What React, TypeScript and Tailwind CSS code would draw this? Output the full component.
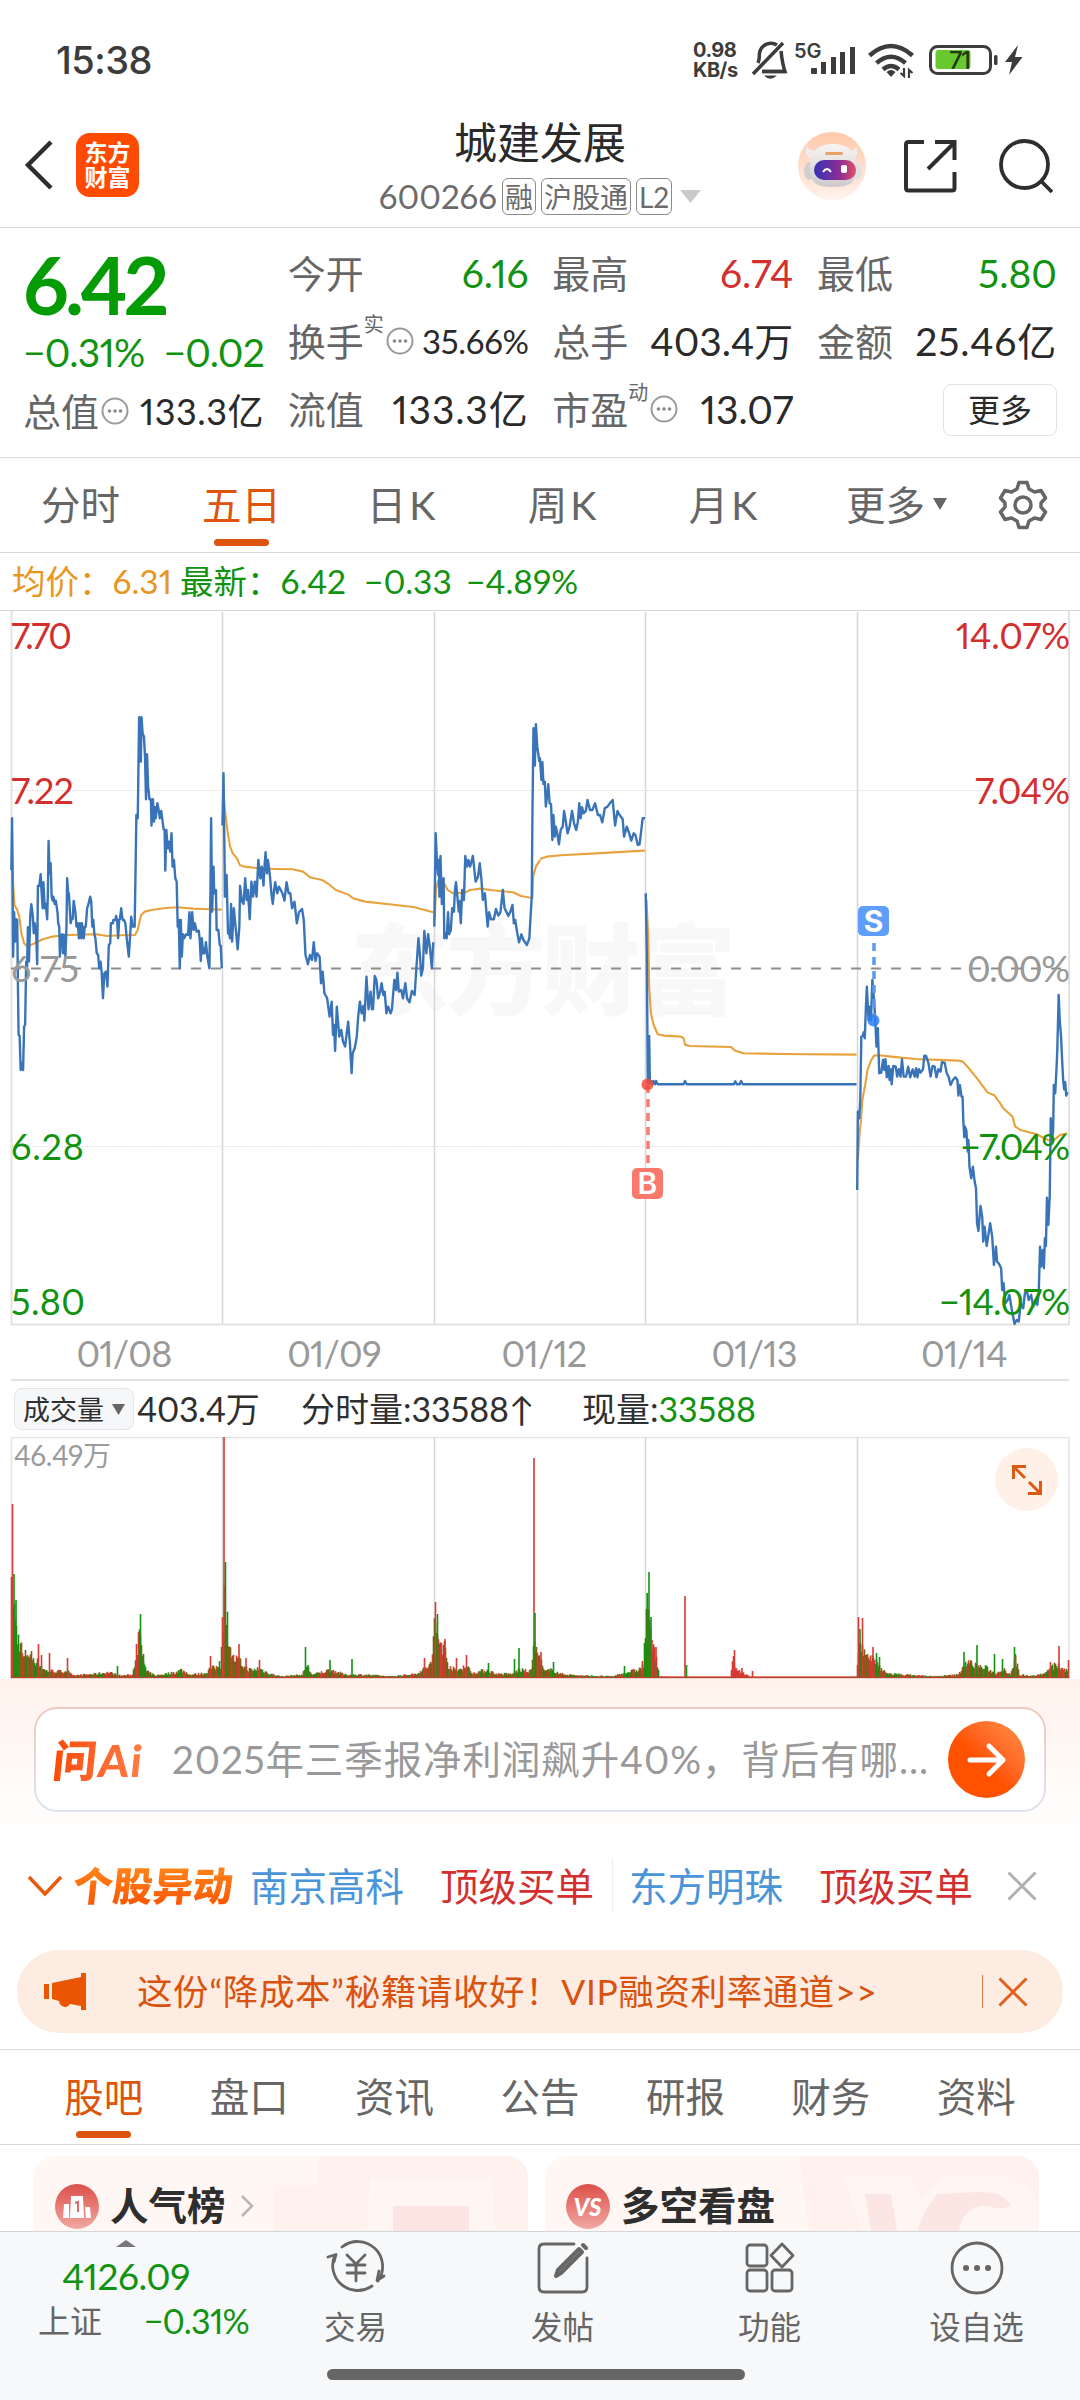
import type { ReactNode } from 'react';
import clsx from 'clsx';

const periods = ['分时', '五日', '日K', '周K', '月K'];
const sections = ['股吧', '盘口', '资讯', '公告', '研报', '财务', '资料'];
const dates = ['01/08', '01/09', '01/12', '01/13', '01/14'];

// price line, left half of the chart
const PRICE_LEFT = [
    '33,810 35,655 38,1070 41,937 44,1025 47,958 50,960 52,1150 54,1305 57,1308 60,1410 63,1388 67,1410 70,1280 73,1275 76,1085 78,1130 81,982 84,1085 88,945 91,913 95,945 98,1000 101,970 105,1003 108,1093 110,858 114,858 118,823 121,880 124,925 126,847 130,925 133,912 137,958 139,880 141,723 144,820 147,790 150,890 153,902 155,890 159,912 162,902 167,937 169,970 172,980 174,1070 177,1005 181,1003 183,1060 186,1005 190,1070 193,980 195,835 198,880 200,880 205,970 208,957 211,957 214,903 219,938 222,980 226,970 229,1015 232,970 236,1015 238,970 243,1015 246,980 249,980 253,925 257,912 262,890 265,905 268,980 271,960 274,1003 277,1015 281,1060 285,1065 288,1105 292,1085 295,1115 299,1195 303,1120 308,1115 312,1160 316,1035 320,1030 322,970 328,970 329,960 335,960 337,948 340,960 343,1015 346,960 348,958 352,925 356,960 360,960 364,970 368,1015 374,1070 378,1005 381,950 385,980 391,980 394,780 396,645 400,655 402,500 404,352 407,400 409,485 411,352 414,400 418,410 421,470 424,598 427,463 430,560 434,598 438,598 440,677 444,598 447,665 450,622 452,655 457,610 461,632 464,655 468,633 471,655 475,688 478,690 480,812 483,690 487,745 491,725 494,755 498,700 501,800 505,780 509,835 513,845 516,980 519,960 522,1105 525,960 528,1070 531,1003 535,1015 540,1003 546,1005 550,937 553,1015 558,937 562,990 566,970 571,995 577,992 580,1020 583,1083 586,1015 590,1060 594,1060 598,1027 602,1070 608,1105 611,880 613,655 616,935 620,800 622,880 627,870 629,990 634,990 638,1035 641,1038 644,1105',
    '646,677 649,520 652,780 653,890 658,825 662,1000 666,1003 668,1015 671,912 674,1025 679,925 684,980 690,1048 695,980 697,858 702,902 707,912 712,835 716,900 720,870 725,958 730,845 735,890 740,845 745,890 750,780 756,835 760,800 765,857 768,800 771,757 775,820 778,780 784,830 788,880 792,912 796,870 799,847 805,880 810,860 815,870 820,880 826,902 832,847 838,880 843,880 848,925 855,905 862,970 868,937 877,927 882,960 887,1065 894,1093 900,1065 906,1080 911,1027 916,1083 921,1060 928,1070 932,1150 937,1115 942,1180 950,1195 957,1250 963,1205 967,1305 970,1275 973,1353 978,1220 985,1310 991,1290 996,1325 1002,1340 1008,1290 1011,1265 1016,1330 1021,1420 1024,1360 1030,1345 1036,1310 1040,1250 1045,1205 1050,1240 1055,1218 1058,1262 1064,1130 1070,1228 1076,1175 1080,1228 1083,1228 1088,1128 1093,1140 1098,1195 1104,1175 1108,1150 1113,1185 1117,1175 1122,1240 1127,1220 1134,1240 1138,1228 1145,1140 1150,1170 1154,1118 1158,1175 1165,1170 1170,1195 1177,1150 1182,1195 1189,1207 1196,1173 1204,1185 1208,1120 1215,1015 1219,1060 1223,1127 1228,1105 1232,993 1238,1060 1243,1003 1248,1040 1254,1105 1258,1027',
    '1261,980 1265,700 1269,790 1272,825 1274,780 1276,890 1279,768 1283,912 1288,835 1290,1015 1294,1000 1297,1015 1301,937 1304,1003 1309,990 1313,925 1318,935 1321,870 1324,847 1328,890 1332,935 1334,903 1338,970 1342,870 1347,900 1351,768 1356,800 1360,780 1365,800 1373,768 1381,845 1388,830 1393,790 1398,840 1402,900 1408,880 1413,945 1416,980 1420,937 1426,958 1434,958 1440,927 1447,947 1453,937 1460,870 1465,925 1470,935 1476,948 1482,935 1488,915 1492,970 1496,960 1502,1000 1507,1027 1514,1003 1520,1020 1530,1035 1537,1015 1540,960 1544,890 1546,640 1549,385 1553,497 1556,373 1560,440 1563,462 1566,485',
];

const PRICE_RIGHT = [
    '-2,485 0,475 4,540 7,487 10,552 14,545 17,620 22,575 24,553 28,610 32,612 36,720 39,645 43,710 46,680 50,700 55,733 60,690 66,680 70,633 75,665 80,700 86,680 93,633 99,670 105,690 110,665 114,610 118,655 122,622 127,640 133,633 138,600 145,630 152,630 160,610 168,645 174,645 181,667 188,625 196,620 203,610 211,600 218,677 225,633 231,645 240,657 244,710 252,680 259,700 265,722 272,700 277,705 284,735 289,733 293,700 298,655 305,655',
    '307,880 310,1050 313,1450 316,1450 317,1308 319,1450 323,1445 326,1453 329,1443 334,1453 337,1443 342,1453 417,1453 421,1443 426,1453 563,1453 567,1444 572,1453 580,1453 584,1443 589,1453 919,1453',
    '921,1770 923,1535 927,1555 930,1500 933,1310 937,1308 940,1297 943,1315 946,1230 949,1160 954,1260 958,1220 961,1262 965,1140 969,1190 973,1250 977,1340 981,1285 985,1420 991,1418 996,1380 1000,1410 1003,1378 1007,1432 1012,1398 1015,1440 1019,1408 1021,1453 1026,1398 1033,1400 1037,1430 1042,1408 1047,1430 1051,1378 1056,1430 1063,1430 1069,1400 1075,1432 1082,1408 1088,1430 1092,1405 1096,1432 1100,1408 1105,1418 1112,1408 1116,1367 1121,1368 1128,1390 1134,1430 1140,1398 1146,1400 1151,1432 1157,1408 1163,1415 1167,1387 1175,1388 1181,1420 1187,1432 1192,1455 1199,1440 1206,1432 1212,1440 1215,1487 1219,1455 1224,1490 1227,1490 1229,1560 1232,1612 1234,1580 1238,1592 1242,1655 1244,1620 1247,1700 1252,1735 1257,1700 1262,1745 1266,1765 1269,1870 1273,1893 1279,1818 1284,1850 1287,1925 1291,1880 1297,1938 1302,1905 1307,1870 1313,1910 1318,1995 1324,1940 1327,1985 1332,1990 1339,2005 1342,2070 1346,2050 1351,2110 1358,2100 1363,2085 1370,2130 1378,2172 1384,2160 1390,2165 1396,2110 1403,2125 1408,2080 1414,2075 1419,2100 1426,2085 1432,2120 1438,2105 1444,2115 1448,2080 1452,1940 1455,2000 1460,1950 1463,2005 1466,1915 1469,1938 1472,1793 1476,1875 1480,1790 1483,1555 1487,1620 1490,1590 1492,1455 1496,1480 1500,1400 1502,1350 1504,1270 1506,1185 1509,1260 1513,1310 1516,1380 1519,1440 1522,1468 1525,1447 1528,1487 1531,1475',
];

const AVG_LEFT = [
    '35,700 38,850 42,915 50,930 56,950 62,1000 70,1030 80,1040 100,1030 125,1018 150,1010 200,1005 280,1003 310,1008 350,1006 392,1005 400,990 405,965 410,945 420,935 440,930 480,924 515,922 560,926 610,928 644,929',
    '648,560 652,620 660,690 668,740 676,760 688,775 696,795 710,800 750,805 800,807 850,808 880,815 900,832 935,840 955,853 975,870 1012,884 1025,895 1060,905 1130,913 1200,921 1258,937',
    '1262,960 1266,870 1272,842 1285,838 1292,855 1300,870 1315,880 1350,878 1365,870 1395,866 1430,871 1490,877 1512,888 1546,894 1548,830 1556,800 1568,780',
];

const AVG_RIGHT = [
    '0,777 20,770 60,766 150,761 250,755 305,752',
    '309,900 314,1000 317,1160 322,1240 330,1275 342,1303 360,1307 410,1310 417,1315 421,1334 435,1338 555,1341 565,1352 590,1360 700,1362 919,1364',
    '923,1680 928,1600 932,1560 936,1500 945,1450 951,1410 962,1380 970,1367 985,1366 1020,1370 1090,1377 1215,1382 1228,1385 1245,1405 1265,1430 1300,1478 1318,1485 1335,1508 1345,1525 1372,1550 1380,1580 1395,1590 1440,1602 1475,1620 1490,1622 1510,1605 1531,1600',
];

// [x, height] of the volume outline, filled in between with noise
const VOLUME: [number, number][] = [
    [11, 100], [14, 80], [17, 50], [20, 44], [23, 24], [27, 32], [32, 26], [38, 18], [45, 9], [60, 8], [67, 9], [72, 3],
    [95, 5], [108, 7], [120, 3], [132, 4], [136, 32], [139, 52], [142, 26], [146, 8], [155, 3], [175, 7], [181, 10], [190, 4],
    [205, 6], [210, 12], [214, 12], [220, 16], [222, 70], [224, 95], [226, 75], [229, 48], [232, 24], [238, 22], [244, 13], [252, 9],
    [258, 12], [268, 6], [280, 2], [302, 4], [306, 15], [312, 4], [330, 10], [345, 4], [365, 4], [390, 2], [415, 5], [425, 12],
    [431, 18], [434, 62], [438, 48], [444, 38], [448, 16], [456, 8], [465, 16], [472, 6], [487, 10], [495, 5], [512, 5], [518, 10],
    [530, 8], [534, 40], [540, 22], [544, 8], [552, 10], [560, 5], [580, 3], [612, 2], [626, 7], [638, 10], [643, 15], [646, 80],
    [649, 60], [652, 35], [656, 28], [659, 2], [682, 1], [730, 1], [733, 24], [736, 10], [743, 6], [750, 1], [856, 1], [858, 45],
    [862, 38], [866, 25], [875, 20], [881, 10], [890, 5], [905, 4], [935, 2], [958, 4], [964, 18], [970, 18], [978, 14], [986, 12],
    [995, 5], [1002, 12], [1010, 5], [1015, 24], [1019, 4], [1034, 3], [1045, 6], [1056, 17], [1060, 12], [1068, 9],
];

const RED = '#d83a34';
const GREEN = '#119311';
const MIXED = '#7d5c14';

const SPIKES: [number, number, string][] = [
    [12, 174, RED], [13.5, 104, GREEN], [15.5, 78, GREEN], [38, 34, RED], [41, 23, RED], [49, 25, RED], [67, 20, RED],
    [117, 12, GREEN], [136, 34, RED], [140, 64, GREEN], [143, 24, GREEN], [210, 22, RED], [219, 17, GREEN], [223.5, 241, RED],
    [225, 116, GREEN], [238.5, 34, RED], [245.5, 20, RED], [259, 18, RED], [305, 31, GREEN], [307.5, 13, GREEN], [329.5, 18, GREEN],
    [351.5, 19, GREEN], [424, 20, RED], [435, 76, RED], [437, 64, GREEN], [444.5, 39, RED], [456, 20, RED], [466, 23, RED],
    [488, 15, GREEN], [514, 19, GREEN], [518.5, 30, GREEN], [533.5, 220, RED], [534.5, 65, GREEN], [540.5, 26, RED], [553, 16, GREEN],
    [624, 12, GREEN], [642, 17, RED], [646.7, 85, GREEN], [648.5, 106, GREEN], [650.5, 61, GREEN], [651.5, 38, RED], [655.5, 31, RED],
    [684.5, 82, RED], [686, 13, GREEN], [734, 28, RED], [741.5, 10, RED], [752, 7, RED], [858, 61, RED], [859.5, 49, GREEN],
    [862, 60, RED], [872.5, 31, RED], [876, 25, GREEN], [879, 21, GREEN], [963.5, 26, GREEN], [976.5, 33, GREEN], [994, 24, GREEN],
    [1002, 19, GREEN], [1014, 31, GREEN], [1015, 22, RED], [1050, 16, RED], [1058.5, 32, RED], [1068, 18, RED],
];

function volumeBars() {
    const bars: [number, number, string][] = [];
    let seed = 7;
    const random = () => {
        seed = (seed * 16807) % 2147483647;
        return seed / 2147483647;
    };

    for (let i = 0; i < VOLUME.length - 1; i++) {
        const [x0, h0] = VOLUME[i];
        const [x1, h1] = VOLUME[i + 1];
        for (let x = x0; x < x1; x++) {
            const h = h0 + ((h1 - h0) * (x - x0)) / (x1 - x0);
            const flat = x > 659 && x < 856;
            const r = random();
            const color = flat ? RED : r < 0.3 ? RED : r < 0.6 ? GREEN : MIXED;
            bars.push([x, Math.max(1.5, h * (0.55 + random() * 0.5)), color]);
        }
    }
    return bars;
}

function Lines({ points, color, width }: { points: string[]; color: string; width: number }) {
    return (
        <>
            {points.map((p) => (
                <polyline key={p} points={p} fill="none" stroke={color} strokeWidth={width} strokeLinejoin="round" vectorEffect="non-scaling-stroke" />
            ))}
        </>
    );
}

function AxisLabel({ y, left, leftEnd, right, rightStart, color }: { y: number; left: string; leftEnd: number; right: string; rightStart: number; color: string }) {
    return (
        <g fill={color} fontSize={36}>
            <text x={11} y={y} textLength={leftEnd - 11}>{left}</text>
            <text x={rightStart} y={y} textLength={1070 - rightStart}>{right}</text>
        </g>
    );
}

const DAY_LINES = [222.5, 434.5, 645.5, 857.5];

function PriceChart() {
    return (
        <svg width="1080" height="716" viewBox="0 610 1080 716" className="block">
            <text x="350" y="1007" fontSize="99" fontWeight="900" fill="#f8f8f8" textLength="386">东方财富</text>
            <g stroke="#d6d6d6" strokeWidth="1.5">
                {DAY_LINES.map((x) => (
                    <line key={x} x1={x} x2={x} y1="612" y2="1325" />
                ))}
            </g>
            <path d="M11.5 611V1324.5H1069V611" fill="none" stroke="#e3e3e3" strokeWidth="2" />
            <path d="M0 610.5H1080" stroke="#d6d6d6" />
            <path d="M12 790.5H1068M12 1146.5H1068" stroke="#cfcfcf" strokeDasharray="1 1.5" />
            <path d="M11 968.5H1068" stroke="#8c8c8c" strokeWidth="2" strokeDasharray="10 10" />
            <g transform="translate(0 600) scale(0.3444 0.3333)">
                <Lines points={AVG_LEFT} color="#e8a23c" width={2.1} />
                <Lines points={PRICE_LEFT} color="#3a74b8" width={2.4} />
            </g>
            <g transform="translate(540 600) scale(0.3444 0.3333)">
                <Lines points={AVG_RIGHT} color="#e8a23c" width={2.1} />
                <Lines points={PRICE_RIGHT} color="#3a74b8" width={2.4} />
            </g>

            <path d="M874 943V1018" stroke="#5b98ee" strokeWidth="3.5" strokeDasharray="8 6" />
            <circle cx="873.5" cy="1020.5" r="6" fill="#2f7ff5" fillOpacity="0.85" />
            <rect x="858" y="906" width="31" height="30" rx="5" fill="#5f9dfa" />
            <text x="873.5" y="932" fontSize="30" fontWeight="700" textAnchor="middle" fill="#fff" className="font-['Inter']">S</text>

            <path d="M648 1085V1163" stroke="#f47c70" strokeWidth="3.5" strokeDasharray="8 6" />
            <circle cx="647.5" cy="1084.5" r="6" fill="#f24b3e" fillOpacity="0.85" />
            <rect x="632" y="1168" width="31" height="31" rx="5" fill="#f9796c" />
            <text x="647.5" y="1194" fontSize="30" fontWeight="600" textAnchor="middle" fill="#fff" className="font-['Inter']">B</text>

            <AxisLabel y={649} left="7.70" leftEnd={72} right="14.07%" rightStart={956} color="#d32f2f" />
            <AxisLabel y={804} left="7.22" leftEnd={74} right="7.04%" rightStart={975} color="#d32f2f" />
            <AxisLabel y={982} left="6.75" leftEnd={79} right="0.00%" rightStart={967} color="#999" />
            <AxisLabel y={1160} left="6.28" leftEnd={84} right="−7.04%" rightStart={960} color="#119311" />
            <AxisLabel y={1315} left="5.80" leftEnd={85} right="−14.07%" rightStart={939} color="#119311" />
        </svg>
    );
}

function VolumeChart() {
    return (
        <div className="relative">
            <svg width="1080" height="242" viewBox="0 1437 1080 242" className="block">
                <path d="M11.5 1679V1437.5H1069V1679" fill="none" stroke="#e3e3e3" strokeWidth="1.5" />
                <g stroke="#d6d6d6" strokeWidth="1.5">
                    {DAY_LINES.map((x) => (
                        <line key={x} x1={x} x2={x} y1="1437" y2="1678" />
                    ))}
                </g>
                {[...volumeBars(), ...SPIKES].map(([x, h, color], i) => (
                    <rect key={i} x={x - 0.3} y={1678 - h} width="1.6" height={h} fill={color} />
                ))}
                <path d="M11 1677.7H1069" stroke="#b5442a" strokeWidth="1.2" />
                <text x="14" y="1466" fontSize="28" fill="#9b9b9b" textLength="97">46.49万</text>
            </svg>
            <div className="absolute right-[22px] top-[11px] flex h-[63px] w-[63px] items-center justify-center rounded-full bg-[#fff0e8]">
                <svg width="32" height="32" viewBox="0 0 32 32" fill="none" stroke="#dd5a12" strokeWidth="3">
                    <path d="M15 2.5H2.5V15M2.5 2.5L14 14M17 29.5H29.5V17M29.5 29.5L18 18" />
                </svg>
            </div>
        </div>
    );
}

function StatusBar() {
    return (
        <div className="flex h-[120px] items-center font-['Inter'] text-[#3c3c3c]">
            <div className="ml-[56px] w-[637px] text-[38px] font-medium tracking-[-0.5px]">15:38</div>
            <div className="w-[59px] text-[20px] font-bold leading-[20px] tracking-[-0.5px]">
                <div>0.98</div>
                <div>KB/s</div>
            </div>
            <svg width="280" height="40" viewBox="752 40 280 40">
                <g fill="none" stroke="#3c3c3c" strokeWidth="3.5">
                    <path d="M753 74L783 43M758 63C760 59 759 56 759.5 53C761 44 771 41 777 45M781 51C782 60 783 66 785 71.5H762" />
                    <path d="M763 71.5H786" />
                </g>
                <path d="M764 75.5H777Q770 82 764 75.5Z" fill="#3c3c3c" />
                <text x="794" y="58" fontSize="20" fontWeight="600" fill="#3c3c3c">5G</text>
                <g fill="#3c3c3c">
                    <rect x="811" y="68" width="6" height="6" rx="1" />
                    <rect x="821" y="62" width="5" height="12" />
                    <rect x="831" y="57" width="5" height="17" />
                    <rect x="840" y="52" width="5" height="22" />
                    <rect x="850" y="47" width="5" height="27" />
                </g>
                <g fill="none" stroke="#3c3c3c" strokeWidth="4.5">
                    <path d="M869.5 55.5Q891 36.5 912.5 55.5" />
                    <path d="M876.5 63Q891 50.5 905.5 63" />
                    <path d="M883 69.5Q891 62.5 899 69.5" />
                </g>
                <path d="M886.5 72Q891 68 895.5 72L891 77Z" fill="#3c3c3c" />
                <path d="M904 68V76L900.5 73M909 78V70L912.5 73" stroke="#3c3c3c" strokeWidth="2.2" fill="none" />
                <rect x="930.5" y="46.5" width="60" height="27" rx="7" fill="none" stroke="#3c3c3c" strokeWidth="3" />
                <rect x="935.5" y="50" width="35" height="19" rx="3" fill="#67c92f" />
                <rect x="994" y="55" width="3.5" height="10" rx="1.5" fill="#3c3c3c" />
                <text x="949" y="69" fontSize="24" fontWeight="500" fill="#1f3a12" textLength="22">71</text>
                <path d="M1018 45L1005 62H1012L1009 75L1022.5 57H1015Z" fill="#3c3c3c" />
            </svg>
        </div>
    );
}

function Tag({ children }: { children: ReactNode }) {
    return (
        <span className="flex h-[37px] shrink-0 items-center whitespace-nowrap rounded-[6px] border border-[#8a8a8a] px-[2px] text-[28px] leading-none">
            {children}
        </span>
    );
}

function RobotAvatar() {
    return (
        <svg width="68" height="68" viewBox="0 0 68 68">
            <defs>
                <linearGradient id="robotBg" x1="0" y1="0" x2="0" y2="1">
                    <stop offset="0" stopColor="#ffc8aa" />
                    <stop offset="1" stopColor="#fff3ec" />
                </linearGradient>
                <linearGradient id="visor" x1="0" y1="0" x2="1" y2="0">
                    <stop offset="0" stopColor="#3434b4" />
                    <stop offset="0.6" stopColor="#8a2d94" />
                    <stop offset="1" stopColor="#e2506a" />
                </linearGradient>
                <linearGradient id="helmet" x1="0" y1="0" x2="0" y2="1">
                    <stop offset="0" stopColor="#f8f5f4" />
                    <stop offset="1" stopColor="#cfc9cb" />
                </linearGradient>
            </defs>
            <circle cx="34" cy="34" r="34" fill="url(#robotBg)" />
            <path d="M9 14Q5 21 12 27L19 19Q11 19 9 14ZM58 14Q62 21 56 27L49 19Q57 19 58 14Z" fill="#f1ecec" />
            <ellipse cx="11" cy="39" rx="5" ry="9" fill="#d3cdd0" />
            <ellipse cx="59" cy="39" rx="5" ry="9" fill="#e4dfe0" />
            <path d="M12 34C12 18 22 12 35 12S58 18 58 34 54 55 35 55 12 50 12 34Z" fill="url(#helmet)" />
            <rect x="27" y="20" width="18" height="3" rx="1.5" fill="#e8a468" />
            <rect x="16" y="28" width="42" height="20" rx="10" fill="url(#visor)" />
            <path d="M25 40Q29 34 33 40" stroke="#fff" strokeWidth="2" fill="none" />
            <rect x="43" y="33" width="6" height="8" rx="2" fill="#fff" />
        </svg>
    );
}

function Header() {
    return (
        <div className="flex h-[108px] items-start justify-between border-b border-[#d9d9d9]">
            <div className="flex w-[370px] items-center pl-[24px] pt-[13px]">
                <svg width="30" height="50" viewBox="0 0 30 50" fill="none" stroke="#2e2e2e" strokeWidth="4.5">
                    <path d="M27 2L4 25L27 48" />
                </svg>
                <div className="ml-[22px] flex h-[64px] w-[63px] flex-col items-center justify-center rounded-[14px] bg-[#ff4a03] text-[23px] font-bold leading-[25px] text-white">
                    <span>东方</span>
                    <span>财富</span>
                </div>
            </div>
            <div className="flex flex-col items-center">
                <div className="h-[58px] whitespace-nowrap text-[43px] leading-[46px] text-[#2a2a2a]">城建发展</div>
                <div className="flex h-[37px] items-center gap-[5px] text-[#6b6b6b]">
                    <span className="text-[33px] leading-none">600266</span>
                    <Tag>融</Tag>
                    <Tag>沪股通</Tag>
                    <Tag>L2</Tag>
                    <svg width="21" height="13" viewBox="0 0 21 13" className="ml-[3px]">
                        <path d="M0 0H21L10.5 13Z" fill="#c9c9c9" />
                    </svg>
                </div>
            </div>
            <div className="flex w-[370px] items-center justify-end pr-[26px] pt-[12px]">
                <RobotAvatar />
                <svg width="54" height="54" viewBox="0 0 54 54" fill="none" stroke="#2e2e2e" strokeWidth="4" className="ml-[37px]">
                    <path d="M21 3H5.5Q3 3 3 5.5V49Q3 51.5 5.5 51.5H49Q51.5 51.5 51.5 49V33M32 3H51.5V21M51 4L25 30" />
                </svg>
                <svg width="56" height="56" viewBox="0 0 56 56" fill="none" stroke="#2e2e2e" strokeWidth="3.8" className="ml-[41px]">
                    <circle cx="26.5" cy="26.5" r="23.5" />
                    <path d="M43 43L54 54" />
                </svg>
            </div>
        </div>
    );
}

function InfoDot() {
    return (
        <svg width="28" height="28" viewBox="0 0 28 28" fill="none" stroke="#9a9a9a" strokeWidth="2" className="ml-[2px] shrink-0">
            <circle cx="14" cy="14" r="12.5" />
            <g fill="#8a8a8a" stroke="none">
                <circle cx="8.5" cy="14" r="1.8" />
                <circle cx="14" cy="14" r="1.8" />
                <circle cx="19.5" cy="14" r="1.8" />
            </g>
        </svg>
    );
}

interface QuoteProps {
    label: string;
    value: string;
    sup?: string;
    info?: boolean;
    className?: string;
}

function Quote({ label, value, sup, info, className = 'text-[39px] text-[#2a2a2a]' }: QuoteProps) {
    return (
        <div className="flex h-[68px] items-center justify-between whitespace-nowrap leading-none">
            <div className="flex items-center text-[38px] text-[#666]">
                {label}
                {sup && <span className="-mt-[34px] text-[20px]">{sup}</span>}
                {info && <InfoDot />}
            </div>
            <span className={className}>{value}</span>
        </div>
    );
}

function QuotePanel() {
    return (
        <div className="flex h-[230px] justify-between border-b border-[#d9d9d9] px-[23px]">
            <div className="w-[241px]">
                <div className="mt-[14px] text-[80px] font-bold leading-[84px] tracking-[-4px] text-[#059b05]">6.42</div>
                <div className="mt-[1px] flex h-[50px] items-center justify-between whitespace-nowrap text-[39px] leading-none tracking-[-0.8px] text-[#119311]">
                    <span>−0.31%</span>
                    <span>−0.02</span>
                </div>
                <Quote label="总值" value="133.3亿" info className="text-[36px] tracking-[0.5px] text-[#2a2a2a]" />
            </div>
            <div className="mt-[11px] w-[241px]">
                <Quote label="今开" value="6.16" className="text-[39px] text-[#119311]" />
                <Quote label="换手" value="35.66%" sup="实" info className="text-[33px] tracking-[-0.3px] text-[#2a2a2a]" />
                <Quote label="流值" value="133.3亿" className="text-[39px] tracking-[0.9px] text-[#2a2a2a]" />
            </div>
            <div className="mt-[11px] w-[241px]">
                <Quote label="最高" value="6.74" className="text-[39px] text-[#d32f2f]" />
                <Quote label="总手" value="403.4万" />
                <Quote label="市盈" value="13.07" sup="动" info />
            </div>
            <div className="mt-[11px] w-[240px]">
                <Quote label="最低" value="5.80" className="text-[39px] text-[#119311]" />
                <Quote label="金额" value="25.46亿" className="text-[39px] tracking-[0.8px] text-[#2a2a2a]" />
                <div className="flex h-[70px] items-center justify-end">
                    <button className="h-[52px] w-[114px] rounded-[8px] border border-[#e3e3e6] text-[32px] leading-none text-[#2a2a2a]">更多</button>
                </div>
            </div>
        </div>
    );
}

function PeriodTabs() {
    return (
        <div className="flex h-[95px] border-b border-[#d9d9d9] text-[39.5px] leading-none text-[#666]">
            {periods.map((label) => (
                <div key={label} className={clsx('flex w-[161px] flex-col items-center pt-[27px]', label === '五日' && 'text-[#dd550c]')}>
                    <span className={clsx('h-[54px]', label.endsWith('K') && 'tracking-[3px]')}>{label}</span>
                    {label === '五日' && <span className="h-[7px] w-[55px] rounded-full bg-[#dd550c]" />}
                </div>
            ))}
            <div className="flex w-[183px] items-start justify-center pt-[27px]">
                更多
                <svg width="14" height="12" viewBox="0 0 14 12" className="ml-[8px] mt-[13px]">
                    <path d="M0 0H14L7 12Z" fill="#666" />
                </svg>
            </div>
            <svg width="50" height="50" viewBox="0 0 50 50" fill="none" stroke="#666" strokeWidth="3.5" strokeLinejoin="round" className="ml-[10px] mt-[22px]">
                <path d="M21 2.5H29L31 9L36.5 12L43 10.5L47.5 18L43 23V27L47.5 32L43 39.5L36.5 38L31 41L29 47.5H21L19 41L13.5 38L7 39.5L2.5 32L7 27V23L2.5 18L7 10.5L13.5 12L19 9Z" />
                <circle cx="25" cy="25" r="8" />
            </svg>
        </div>
    );
}

function PriceSummary() {
    return (
        <div className="flex h-[57px] items-center whitespace-pre pl-[12px] text-[33.5px] leading-none text-[#119311]">
            <span className="w-[168px] text-[#e8961e]">均价：6.31</span>
            <span className="w-[184px]">最新：6.42</span>
            <span className="w-[102px]">−0.33</span>
            <span>−4.89%</span>
        </div>
    );
}

function AiSearch() {
    return (
        <div className="h-[161px] bg-linear-to-b from-[#fff2ec] to-white pt-[28px]">
            <div className="mx-[34px] rounded-[23px] bg-linear-to-b from-[#efc9bf] to-[#dde3f0] p-[2px]">
                <div className="flex h-[101px] items-center rounded-[21px] bg-white">
                    <div className="ml-[17px] w-[119px] -skew-x-6 bg-linear-to-r from-[#fb4a00] to-[#ff8a50] bg-clip-text text-[44px] font-black leading-[50px] tracking-[1.5px] text-transparent">问Ai</div>
                    <div className="w-[776px] whitespace-nowrap text-[38.5px] leading-none tracking-[0.9px] text-[#999]">2025年三季报净利润飙升40%，背后有哪...</div>
                    <div className="flex h-[77px] w-[77px] items-center justify-center rounded-full bg-linear-to-tr from-[#ff5200] from-45% to-[#ff9048]">
                        <svg width="40" height="36" viewBox="0 0 40 36" fill="none" stroke="#fff" strokeWidth="5" strokeLinecap="round" strokeLinejoin="round">
                            <path d="M3 18H36M22 4L36 18L22 32" />
                        </svg>
                    </div>
                </div>
            </div>
        </div>
    );
}

function Cross({ color }: { color: string }) {
    return (
        <svg width="30" height="30" viewBox="0 0 30 30" stroke={color} strokeWidth="3">
            <path d="M1.5 1.5L28.5 28.5M28.5 1.5L1.5 28.5" />
        </svg>
    );
}

function Movers() {
    return (
        <div className="flex h-[92px] items-center whitespace-nowrap text-[38.5px] leading-none">
            <svg width="36" height="22" viewBox="0 0 36 22" fill="none" stroke="#e8590c" strokeWidth="3.5" className="ml-[27px]">
                <path d="M2 2L18 19L34 2" />
            </svg>
            <div className="ml-[10px] w-[177px] -skew-x-6 bg-linear-to-b from-[#ff8a1a] to-[#fa4e00] bg-clip-text text-[40px] font-black leading-[50px] text-transparent">个股异动</div>
            <span className="w-[190px] text-[#4a94d8]">南京高科</span>
            <span className="w-[172px] text-[#d32f2f]">顶级买单</span>
            <span className="h-[54px] w-[17px] border-l border-[#eee]" />
            <span className="w-[190px] text-[#4a94d8]">东方明珠</span>
            <span className="w-[188px] text-[#d32f2f]">顶级买单</span>
            <Cross color="#b0b0b0" />
        </div>
    );
}

function Banner() {
    return (
        <div className="mx-[17px] mt-[18px] flex h-[83px] items-center rounded-full bg-[#fdece2] text-[#d9530f]">
            <svg width="43" height="37" viewBox="0 0 43 37" fill="#ea5504" className="ml-[27px]">
                <path d="M0 11H5V26H0ZM8 10L37 4V0H42V37H37V33L26 31Q23 36 18 33Q15 31 15 28L8 26Z" />
            </svg>
            <span className="ml-[50px] w-[845px] whitespace-nowrap text-[35.5px] leading-none tracking-[0.6px]">这份“降成本”秘籍请收好！VIP融资利率通道&gt;&gt;</span>
            <span className="h-[33px] w-[16px] border-l border-[#e07a45]" />
            <Cross color="#e0601c" />
        </div>
    );
}

function SectionTabs() {
    return (
        <div className="mt-[16px] flex h-[96px] border-y border-[#d9d9d9] px-[31px] text-[39.5px] leading-none text-[#666]">
            {sections.map((label, i) => (
                <div key={label} className={clsx('flex flex-1 flex-col items-center pt-[27px]', i === 0 && 'text-[#dd550c]')}>
                    <span className="h-[54px]">{label}</span>
                    {i === 0 && <span className="h-[7px] w-[55px] rounded-full bg-[#dd550c]" />}
                </div>
            ))}
        </div>
    );
}

function Cards() {
    return (
        <div className="flex h-[86px] gap-[17px] overflow-hidden px-[33px] pt-[11px] text-[38.5px] font-bold leading-none text-[#2e2e2e]">
            <div className="relative flex h-[140px] w-[495px] items-start overflow-hidden rounded-[22px] bg-[#fff7f4]">
                <svg width="255" height="75" viewBox="0 0 255 75" className="absolute right-0 top-0">
                    <path d="M46 0H255V75H0V29H46Z" fill="#fef1ee" />
                    <path d="M97 22H219L222 75H94Z" fill="#fff6f3" />
                    <path d="M120 50H196V75H120Z" fill="#fbe4e2" />
                </svg>
                <svg width="44" height="45" viewBox="0 0 44 45" className="ml-[22px] mt-[28px]">
                    <defs>
                        <linearGradient id="cardIcon" x1="0" y1="0" x2="0" y2="1">
                            <stop offset="0" stopColor="#dc4f49" />
                            <stop offset="1" stopColor="#f3a8a2" />
                        </linearGradient>
                    </defs>
                    <ellipse cx="22" cy="22.5" rx="22" ry="22.5" fill="url(#cardIcon)" />
                    <path d="M9 20H14V34H8ZM16 12H28L29 34H15ZM30 23H35L36 34H31Z" fill="#fff" />
                    <path d="M20 19L23 18V28" stroke="#df6a64" strokeWidth="2" fill="none" />
                </svg>
                <span className="ml-[11px] mt-[30px]">人气榜</span>
                <svg width="14" height="24" viewBox="0 0 14 24" fill="none" stroke="#b5b5b5" strokeWidth="2.5" className="ml-[14px] mt-[38px]">
                    <path d="M2 2L12 12L2 22" />
                </svg>
            </div>
            <div className="relative flex h-[140px] w-[494px] items-start overflow-hidden rounded-[22px] bg-[#fff7f4]">
                <svg width="240" height="75" viewBox="0 0 240 75" className="absolute right-0 top-0">
                    <path d="M0 0H240V75H10Z" fill="#fef1ee" />
                    <path d="M45 20H112L122 45L145 20H200Q232 25 240 50V75H62Z" fill="#fff6f3" />
                    <path d="M66 38H92L98 75H72ZM138 38Q125 55 118 75H160Q165 48 190 50Q200 55 212 50Q205 35 180 36Z" fill="#fbe6e3" />
                </svg>
                <svg width="44" height="45" viewBox="0 0 44 45" className="ml-[21px] mt-[28px]">
                    <ellipse cx="22" cy="22.5" rx="22" ry="22.5" fill="url(#cardIcon)" />
                    <text x="21.5" y="32" fontSize="24" fontWeight="900" fontStyle="italic" textAnchor="middle" fill="#fff">VS</text>
                </svg>
                <span className="ml-[11px] mt-[30px]">多空看盘</span>
            </div>
        </div>
    );
}

function NavItem({ label, children }: { label: string; children: ReactNode }) {
    return (
        <div className="flex w-[207px] flex-col items-center pt-[8px]">
            <svg width="62" height="56" viewBox="-31 -28 62 56" fill="none" stroke="#666" strokeWidth="2.8" strokeLinecap="round" strokeLinejoin="round">
                {children}
            </svg>
            <span className="mt-[16px] text-[31.5px] leading-none text-[#666]">{label}</span>
        </div>
    );
}

function BottomNav() {
    return (
        <div className="h-[169px] border-t border-[#d3d5d9] bg-[#f6f8fa]">
            <div className="flex h-[137px]">
                <div className="flex w-[252px] flex-col items-center leading-none">
                    <svg width="20" height="7" viewBox="0 0 20 7" className="mt-[8px]">
                        <path d="M0 7L10 0L20 7Z" fill="#77777c" />
                    </svg>
                    <span className="mt-[10px] text-[37px] tracking-[-0.5px] text-[#119311]">4126.09</span>
                    <div className="ml-[35px] mt-[10px] flex w-[211px] items-center justify-between whitespace-nowrap">
                        <span className="text-[32px] text-[#666]">上证</span>
                        <span className="text-[34px] tracking-[-0.8px] text-[#119311]">−0.31%</span>
                    </div>
                </div>
                <NavItem label="交易">
                    <path d="M-14 -21A25 25 0 0 1 22 13M16 18A25 25 0 0 1 -21 -13M-28 -11L-20 -13.5L-22 -6M28 8L21 12.5L23 3" />
                    <path d="M-9 -13L0 -4L9 -13M0 -4V13M-9 -3H9M-9 5H9" />
                </NavItem>
                <NavItem label="发帖">
                    <path d="M11 -24H-19Q-24 -24 -24 -19V19Q-24 24 -19 24H19Q24 24 24 19V-10" />
                    <path d="M-7 8L-5 2L16 -19L19 -16L-2 5ZM20 -23L23 -20" strokeWidth="4" />
                </NavItem>
                <NavItem label="功能">
                    <rect x="-23" y="-23" width="20" height="21" rx="3" />
                    <rect x="-23" y="2" width="20" height="21" rx="3" />
                    <rect x="2" y="2" width="20" height="21" rx="3" />
                    <path d="M12 -24L23 -12.5L12 -1L1 -12.5Z" />
                </NavItem>
                <NavItem label="设自选">
                    <circle r="25" />
                    <path d="M-11 0H-10.9M0 0H0.1M11 0H11.1" strokeWidth="6" />
                </NavItem>
            </div>
            <div className="ml-[327px] h-[11px] w-[418px] rounded-full bg-[#666]" />
        </div>
    );
}

export default function App() {
    return (
        <div className="h-[2400px] w-[1080px] overflow-hidden bg-white font-['Lato','Noto_Sans_CJK_SC',sans-serif] proportional-nums">
            <StatusBar />
            <Header />
            <QuotePanel />
            <PeriodTabs />
            <PriceSummary />
            <PriceChart />
            <div className="mx-[11px] flex h-[55px] items-center border-b-2 border-[#e3e3e3] pl-[8px] text-[36px] leading-none tracking-[-0.8px] text-[#999]">
                {dates.map((date) => (
                    <span key={date} className="flex-1 text-center">{date}</span>
                ))}
            </div>
            <div className="flex h-[56px] items-center whitespace-nowrap pl-[14px] text-[34px] leading-none text-[#2f2f2f]">
                <div className="flex h-[42px] w-[120px] items-center justify-center gap-[8px] rounded-[8px] border border-[#e3e5e9] bg-[#f6f7f9] text-[27px]">
                    成交量
                    <svg width="13" height="11" viewBox="0 0 13 11">
                        <path d="M0 0H13L6.5 11Z" fill="#666" />
                    </svg>
                </div>
                <span className="ml-[3px] w-[164px] tracking-[-0.4px]">403.4万</span>
                <span className="w-[281px]">分时量:33588↑</span>
                <span>现量:<span className="text-[#119311]">33588</span></span>
            </div>
            <VolumeChart />
            <AiSearch />
            <Movers />
            <Banner />
            <SectionTabs />
            <Cards />
            <BottomNav />
        </div>
    );
}
